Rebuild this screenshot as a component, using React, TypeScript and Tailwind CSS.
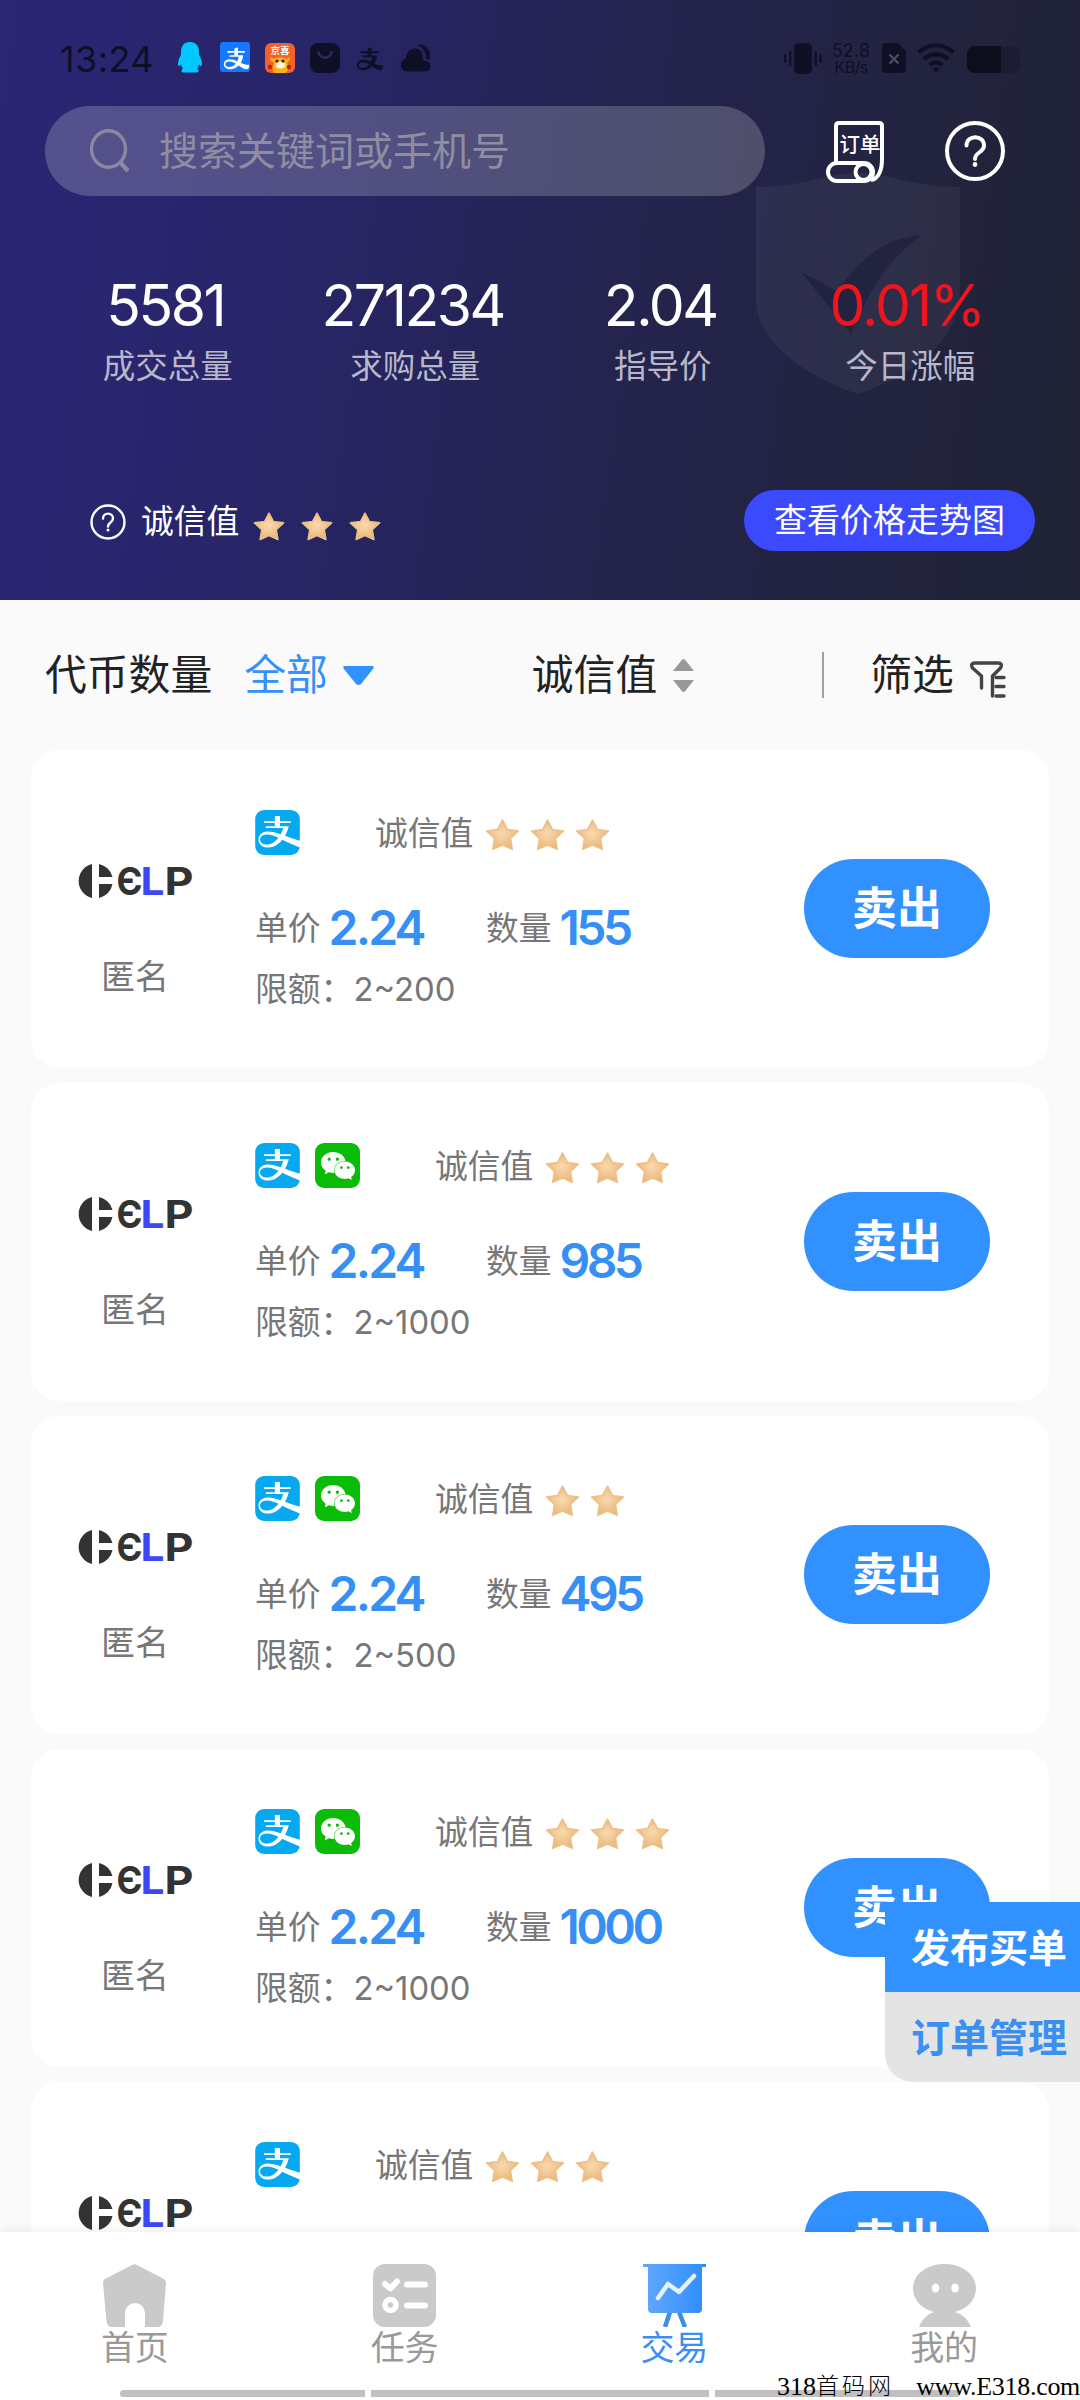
import type { ReactNode } from "react";
import { AiOutlineAlipay } from "react-icons/ai";
import { SiAlipay, SiWechat } from "react-icons/si";

type Order = {
  pay: string[];
  stars: number;
  price: string;
  amount: string;
  limit: string;
};

const stats = [
  { value: "5581", label: "成交总量" },
  { value: "271234", label: "求购总量" },
  { value: "2.04", label: "指导价" },
  { value: "0.01%", label: "今日涨幅", red: true },
];

const orders: Order[] = [
  { pay: ["alipay"], stars: 3, price: "2.24", amount: "155", limit: "2~200" },
  { pay: ["alipay", "wechat"], stars: 3, price: "2.24", amount: "985", limit: "2~1000" },
  { pay: ["alipay", "wechat"], stars: 2, price: "2.24", amount: "495", limit: "2~500" },
  { pay: ["alipay", "wechat"], stars: 3, price: "2.24", amount: "1000", limit: "2~1000" },
];

function Star({ className }: { className: string }) {
  return (
    <svg viewBox="0 0 34 31" preserveAspectRatio="none" className={className}>
      <defs>
        <radialGradient id="star" cx="0.48" cy="0.45" r="0.55">
          <stop offset="0" stopColor="#f9d9b0" />
          <stop offset="1" stopColor="#e9b776" />
        </radialGradient>
      </defs>
      <path
        d="M17 1.200l4.800 9 10.700 1.400-7.800 7.200 1.800 10.600-9.500-4.200-9.500 4.200 1.800-10.600-7.800-7.200 10.700-1.400z"
        fill="url(#star)"
        stroke="#ecc08a"
        strokeWidth="1.600"
        strokeLinejoin="round"
      />
    </svg>
  );
}

function StatusBar() {
  return (
    <div className="flex h-[106px] items-start pt-[42px] pr-[60px] pl-[60px] text-[#0f0f26]">
      <span className="w-[118px] pt-px text-[36px] leading-[32px] tracking-[0.4px] whitespace-nowrap">13:24</span>
      <svg viewBox="0 0 24 31" className="h-[31px] w-[24px]">
        <path
          d="M12 0C6 0 3 4 3 10v3C1 16 0 19 0 22c0 2 1 3 3 .5.4 2 1 3 2 4-2 1-2 4 0 4h14c2 0 2-3 0-4 1-1 1.600-2 2-4 2 2.500 3 1.500 3-.5 0-3-1-6-3-9v-3C21 4 18 0 12 0z"
          fill="#00c8ff"
        />
      </svg>
      <div className="ml-[18px] h-[30px] w-[30px] overflow-hidden rounded-[3px] bg-[#1677ff]">
        <AiOutlineAlipay className="mt-[2px] ml-[2px] h-[29px] w-[29px] text-white" />
      </div>
      <svg viewBox="0 0 30 30" className="mt-px ml-[15px] h-[30px] w-[30px]">
        <rect width="30" height="30" rx="6" fill="#f4602c" />
        <text x="15" y="10.500" fontSize="9.500" fontWeight="700" fill="#fff" textAnchor="middle">京喜</text>
        <path d="M5 14l4 2c2-2 10-2 12 0l4-2-1 4-2 1c1 3 2 7-1 11H9c-2-4-1-8 0-11l-3-1z" fill="#ffb31a" />
        <ellipse cx="15.500" cy="22" rx="5" ry="3.500" fill="#fff2df" />
        <circle cx="12" cy="18" r="1.600" fill="#3a1c10" />
        <circle cx="18" cy="18" r="1.600" fill="#3a1c10" />
        <circle cx="5" cy="24" r="2.200" fill="#a8281a" />
        <circle cx="24" cy="24" r="2.200" fill="#a8281a" />
      </svg>
      <svg viewBox="0 0 30 30" className="mt-px ml-[15px] h-[30px] w-[30px]">
        <rect width="30" height="30" rx="8" fill="currentColor" />
        <path d="M8.500 9c1 7.500 12 7.500 13 0" fill="none" stroke="#29266a" strokeWidth="2.600" strokeLinecap="round" />
      </svg>
      <AiOutlineAlipay className="mt-[2px] ml-[15px] h-[30px] w-[30px]" />
      <svg viewBox="0 0 31 28" className="mt-[2px] ml-[15px] h-[28px] w-[31px]">
        <path d="M17 1.500C23-2 31 4 30 14c-.5 2-2 2-4 1C26 8 23 3 17 1.500z" fill="currentColor" />
        <path
          d="M7 28a7 7 0 0 1-4-12.500c2-1 2.500-2 3-4C8 5 14 2 19 5c4 2 4 6 4.500 9 0 2 .8 2.500 2.500 2.500a5.800 5.800 0 0 1 0 11.500z"
          fill="currentColor"
          stroke="#28256a"
          strokeWidth="1"
        />
      </svg>
      <div className="ml-auto flex">
        <svg viewBox="0 0 38 31" className="mt-px h-[31px] w-[38px]" fill="currentColor">
          <rect x="10" y="0" width="18" height="31" rx="5" />
          <path d="M0 11h2.200v9H0zM5 8h2.400v15H5zM30.500 8h2.400v15h-2.400zM35.500 11h2.200v9h-2.200z" />
        </svg>
        <div className="ml-[9px] w-[40px] text-center text-[18.500px] leading-[17px]">
          <div className="text-[18px] tracking-[0.2px]">52.8</div>
          <div className="text-[16px] tracking-[-0.6px]">KB/s</div>
        </div>
        <svg viewBox="0 0 24 30" className="mt-px ml-[11px] h-[30px] w-[24px]">
          <path d="M4 0h12l8 8v18a4 4 0 0 1-4 4H4a4 4 0 0 1-4-4V4a4 4 0 0 1 4-4z" fill="currentColor" />
          <path d="M7.500 11.500l9 9m0-9l-9 9" stroke="#4a4a63" strokeWidth="2.400" />
        </svg>
        <svg viewBox="0 0 38 30" className="mt-px ml-[11px] h-[30px] w-[38px]" fill="none" stroke="currentColor" strokeWidth="4">
          <path d="M1.500 9.500C12-.3 26-.3 36.500 9.500M7 16c7-6.500 17-6.500 24 0M12.500 22c4-3.500 9-3.500 13 0" />
          <path d="M15 25.500c2.500-2 5.500-2 8 0L19 30z" fill="currentColor" stroke="none" />
        </svg>
        <div className="mt-[4px] ml-[12px] flex h-[27px] w-[53px] overflow-hidden rounded-[8px] bg-[#1c1c33]">
          <div className="w-[34px] bg-[#0e0d1c]" />
        </div>
      </div>
    </div>
  );
}

function Header() {
  return (
    <header className="relative h-[600px] bg-linear-[98deg,#2b2675_0%,#28256a_25%,#242450_55%,#22233c_85%,#212336_100%]">
      {/* shield watermark behind the stats */}
      <svg viewBox="0 0 204 222" className="absolute top-[173px] left-[756px] h-[222px] w-[204px]">
        <path d="M0 14C45 14 75 0 102 0s57 14 102 14V116c0 48-40 84-102 105C40 200 0 164 0 126z" fill="#fff" fillOpacity="0.05" />
        <path d="M45 99l36 19C105 85 130 64 166 62c-35 25-53 55-71 99z" fill="#222241" />
      </svg>
      <div className="relative">
        <StatusBar />
        <div className="flex items-center pl-[45px]">
          <div className="flex h-[90px] w-[720px] items-center rounded-full bg-white/20 pl-[45px]">
            <svg viewBox="0 0 40 44" className="h-[44px] w-[40px]" fill="none" stroke="#8b899f" strokeWidth="3.400">
              <ellipse cx="18.500" cy="20" rx="17" ry="18.300" />
              <path d="M30 33l8 9" strokeWidth="4.200" />
            </svg>
            <span className="mt-[-2px] ml-[29px] text-[39px] leading-none text-[#8f8da2]">搜索关键词或手机号</span>
          </div>
          <svg viewBox="0 0 60 64" className="ml-[60px] h-[64px] w-[60px]" fill="none" stroke="#fff" strokeWidth="4">
            <path d="M11 44V7q0-3 3-3h40q3 0 3 3v33c0 12-4 20-11 21" />
            <rect x="3" y="44" width="45" height="18" rx="9" />
            <circle cx="38.500" cy="53" r="8" />
            <text x="35" y="33" fontSize="20.500" fontWeight="500" fill="#fff" stroke="none" textAnchor="middle">订单</text>
          </svg>
          <svg viewBox="0 0 60 60" className="ml-[60px] h-[60px] w-[60px]" fill="none" stroke="#fff" strokeWidth="4">
            <circle cx="30" cy="30" r="28" />
            <path d="M21.500 24.500c0-11 17.500-11 17.500 0 0 7-9 6.500-9 13.500" strokeLinecap="round" />
            <circle cx="30" cy="43.500" r="2.400" fill="#fff" stroke="none" />
          </svg>
        </div>
        <div className="mt-[81px] grid grid-cols-4 pr-[46px] pl-[44px] text-center">
          {stats.map((s) => (
            <div key={s.label}>
              <div className={s.red ? "mr-[7px] text-[57px] leading-[58px] tracking-[-2px] text-[#f1141c]" : "mr-[5px] text-[57px] leading-[58px] tracking-[-2.400px] text-white"}>
                {s.value}
              </div>
              <div className="mt-[14px] text-[32.5px] leading-[36px] text-[#b9b8cb]">{s.label}</div>
            </div>
          ))}
        </div>
        <div className="mt-[105px] flex items-center pr-[45px] pl-[90px]">
          <svg viewBox="0 0 36 36" className="mt-[2px] h-[36px] w-[36px]" fill="none" stroke="#fff" strokeWidth="2.400">
            <circle cx="18" cy="18" r="16.500" />
            <path d="M13 14.500c0-6.500 10-6.500 10 0 0 4-5 4-5 8" strokeLinecap="round" />
            <circle cx="18" cy="26" r="1.500" fill="#fff" stroke="none" />
          </svg>
          <span className="mt-[2px] ml-[15px] text-[32.8px] leading-none text-white">诚信值</span>
          <div className="mt-[11px] ml-[14px] flex gap-[16px]">
            <Star className="h-[29px] w-[32px]" />
            <Star className="h-[29px] w-[32px]" />
            <Star className="h-[29px] w-[32px]" />
          </div>
          <button className="ml-auto h-[61px] w-[291px] rounded-full bg-[#3c4afd] pb-px text-[33px] leading-none text-white">
            查看价格走势图
          </button>
        </div>
      </div>
    </header>
  );
}

function FilterBar() {
  return (
    <div className="flex h-[150px] items-center pl-[45px] text-[41.8px] leading-none text-[#222]">
      <span className="mt-[2px]">代币数量</span>
      <span className="mt-[2px] ml-[32px] text-[#3491fb]">全部</span>
      <svg viewBox="0 0 31 19" className="ml-[15px] h-[19px] w-[31px]">
        <path d="M2 0h27q3 0 1 3L18 18q-2.500 2-5 0L1 3q-2-3 1-3z" fill="#3192ff" />
      </svg>
      <span className="mt-[2px] ml-[158px]">诚信值</span>
      <svg viewBox="0 0 21 33" className="ml-[16px] h-[33px] w-[21px]" fill="#999">
        <path d="M0 12L9 .8q1.500-1.500 3 0L21 12zM0 21L9 32.200q1.500 1.500 3 0L21 21z" />
      </svg>
      <div className="ml-[128px] h-[46px] w-[2px] bg-[#a0a0a0]" />
      <span className="mt-[2px] ml-[46px]">筛选</span>
      <svg viewBox="0 0 36 37" className="mt-[8px] ml-[16px] h-[37px] w-[36px]" fill="none" stroke="#444" strokeWidth="3.400" strokeLinecap="round" strokeLinejoin="round">
        <path d="M11.500 27V15L2.500 7Q0 2 5 2h23q5 0 2.500 5l-8 8v20" />
        <path d="M26 16.500h8M26 25.500h8M26 35h8" />
      </svg>
    </div>
  );
}

function PayIcon({ type }: { type: string }) {
  if (type === "wechat") {
    return (
      <div className="flex h-[45px] w-[45px] items-center justify-center rounded-[9px] bg-[#0abb07]">
        <SiWechat className="h-[34px] w-[34px] text-white" />
      </div>
    );
  }
  return (
    <div className="h-[45px] w-[45px] overflow-hidden rounded-[9px] bg-white">
      <SiAlipay className="h-[45px] w-[45px] text-[#06a9f0]" />
    </div>
  );
}

function Logo() {
  return (
    <svg viewBox="0 0 115 36" className="h-[36px] w-[115px] overflow-visible">
      <path d="M14 1v34A17.500 17.500 0 0 1 14 1zM21 1A17.500 17.500 0 0 1 34.500 14H21zM21 21h13.500A17.500 17.500 0 0 1 21 35z" fill="#333" />
      <g fontFamily="Inter" fontWeight="700" fontSize="38" fill="#333">
        <text x="38.500" y="32" textLength="26" lengthAdjust="spacingAndGlyphs">Є</text>
        <text x="62.500" y="32" textLength="24" lengthAdjust="spacingAndGlyphs" fill="#3d47f5">L</text>
        <text x="86.500" y="32" textLength="29" lengthAdjust="spacingAndGlyphs">P</text>
      </g>
    </svg>
  );
}

function OrderCard({ order }: { order: Order }) {
  return (
    <div className="flex h-[318px] shrink-0 rounded-[28px] bg-white">
      <div className="flex w-[208px] flex-col items-center pt-[113px]">
        <Logo />
        <span className="mt-[60px] text-[34px] leading-[36px] text-[#777]">匿名</span>
      </div>
      <div className="flex-1 pt-[60px] pl-[16px] text-[32.8px] text-[#777]">
        <div className="flex h-[45px] items-center gap-[15px]">
          {order.pay.map((p) => (
            <PayIcon key={p} type={p} />
          ))}
          <span className="mt-px ml-[60px] leading-none">诚信值</span>
          <div className="mt-[4px] ml-[-3px] flex gap-[10px]">
            {Array.from({ length: order.stars }, (_, i) => (
              <Star key={i} className="h-[32px] w-[35px]" />
            ))}
          </div>
        </div>
        <div className="mt-[45px] flex h-[56px] items-center leading-none">
          <div className="flex w-[231px] items-center">
            <span>单价</span>
            <span className="ml-[8px] text-[48px] font-semibold tracking-[-2.8px] text-[#368ff5]">{order.price}</span>
          </div>
          <span>数量</span>
          <span className="ml-[8px] text-[48px] font-semibold tracking-[-3.600px] text-[#368ff5]">{order.amount}</span>
        </div>
        <div className="mt-[15px] flex h-[36px] items-center leading-none">
          <span>限额：</span>
          <span className="tracking-[0px]">{order.limit}</span>
        </div>
      </div>
      <button className="mt-[109px] mr-[59px] h-[99px] w-[186px] rounded-full bg-[#3191ff] text-[45px] leading-none font-bold text-white">
        卖出
      </button>
    </div>
  );
}

// last visible row, the list scrolls on underneath the tab bar
function PartialCard() {
  return (
    <div className="flex h-[318px] shrink-0 rounded-[28px] bg-white">
      <div className="flex w-[208px] flex-col items-center pt-[113px]">
        <Logo />
      </div>
      <div className="flex-1 pt-[60px] pl-[16px] text-[32.8px] text-[#777]">
        <div className="flex h-[45px] items-center gap-[15px]">
          <PayIcon type="alipay" />
          <span className="mt-px ml-[60px] leading-none">诚信值</span>
          <div className="mt-[4px] ml-[-3px] flex gap-[10px]">
            <Star className="h-[32px] w-[35px]" />
            <Star className="h-[32px] w-[35px]" />
            <Star className="h-[32px] w-[35px]" />
          </div>
        </div>
      </div>
      <button className="mt-[109px] mr-[59px] h-[99px] w-[186px] rounded-full bg-[#3191ff] text-[45px] leading-none font-bold text-white">
        卖出
      </button>
    </div>
  );
}

function Tab({ label, active, children }: { label: string; active?: boolean; children: ReactNode }) {
  return (
    <div className="flex flex-1 flex-col items-center pt-[32px]">
      <svg viewBox="0 0 63 63" className="h-[63px] w-[63px]" fill="#cacaca">
        {children}
      </svg>
      <span className={active ? "mt-[3px] text-[34px] leading-[36px] text-[#3a8ff0]" : "mt-[3px] text-[34px] leading-[36px] text-[#999]"}>
        {label}
      </span>
    </div>
  );
}

function TabBar() {
  return (
    <nav className="relative flex h-[168px] shrink-0 bg-white pr-px shadow-[0_-2px_9px_rgba(0,0,0,0.07)]">
      <Tab label="首页">
        <path d="M29 1q2.500-1.500 5 0l27 14q2 1.200 2 4l-3 38q-.6 6-6 6H42V49a10 10 0 0 0-20 0v14H9q-5 0-5.500-6L0 19q0-2.800 2-4z" />
      </Tab>
      <Tab label="任务">
        <rect width="63" height="63" rx="12" />
        <g fill="none" stroke="#fff" strokeWidth="6" strokeLinecap="round" strokeLinejoin="round">
          <path d="M12 20l5.500 4.500L24 17.500M34 20.500h18M34 41.500h18" />
          <circle cx="17.500" cy="41" r="5.500" strokeWidth="5.500" />
        </g>
      </Tab>
      <Tab label="交易" active>
        <defs>
          <linearGradient id="board">
            <stop offset="0" stopColor="#62a9fb" />
            <stop offset="1" stopColor="#2e8dfb" />
          </linearGradient>
        </defs>
        <path d="M27 48l-5 15M36 48l6 15" stroke="#3e8ee6" strokeWidth="4.500" />
        <path d="M0 0h63v3h-4v42q0 4-4 4H9q-4 0-4-4V3H0z" fill="url(#board)" />
        <path d="M15 34l10-14 11 8 15-16" fill="none" stroke="#e6f0ff" strokeWidth="4.500" strokeLinecap="round" strokeLinejoin="round" />
      </Tab>
      <Tab label="我的">
        <path d="M31.500 0C50 0 63 11 63 24.500 63 36 54 45 42 48c7 2 13 7 16 15H6c3-8 9-13 15-15C9 45 0 36 0 24.500 0 11 13 0 31.500 0z" />
        <ellipse cx="22.500" cy="24" rx="3.800" ry="4.500" fill="#fff" />
        <ellipse cx="42" cy="24" rx="3.800" ry="4.500" fill="#fff" />
      </Tab>
      {/* gesture bar */}
      <div className="absolute bottom-[3px] left-[120px] flex h-[7px] w-[840px] gap-[6px] overflow-hidden rounded-full">
        <div className="w-[245px] bg-[#c0c0c0]" />
        <div className="w-[338px] bg-[#c0c0c0]" />
        <div className="flex-1 bg-[#c0c0c0]" />
      </div>
      <div className="absolute right-0 bottom-0 flex w-[303px] items-center font-['Liberation_Serif','Noto_Sans_CJK_SC',serif] text-[26px] leading-[26px] whitespace-nowrap text-black">
        <span>318</span>
        <span className="text-[23px] font-light tracking-[3px]">首码网</span>
        <span className="ml-auto tracking-[-0.3px]">www.E318.com</span>
      </div>
    </nav>
  );
}

export default function App() {
  return (
    <div className="relative flex h-[2400px] w-[1080px] flex-col overflow-hidden bg-[#fafafa] font-['Inter','Noto_Sans_CJK_SC',sans-serif]">
      <Header />
      <FilterBar />
      <main className="flex min-h-0 flex-1 flex-col gap-[15px] overflow-hidden px-[31px]">
        {orders.map((o, i) => (
          <OrderCard key={i} order={o} />
        ))}
        <PartialCard />
      </main>
      <TabBar />
      <div className="absolute top-[1902px] right-0 flex w-[195px] flex-col overflow-hidden rounded-bl-[28px] text-[39px] leading-none font-bold">
        <button className="h-[90px] bg-[#3191ff] pl-[13px] text-white">发布买单</button>
        <button className="h-[90px] bg-[#e4e4e4] pl-[13px] text-[#3a8ff0]">订单管理</button>
      </div>
    </div>
  );
}
